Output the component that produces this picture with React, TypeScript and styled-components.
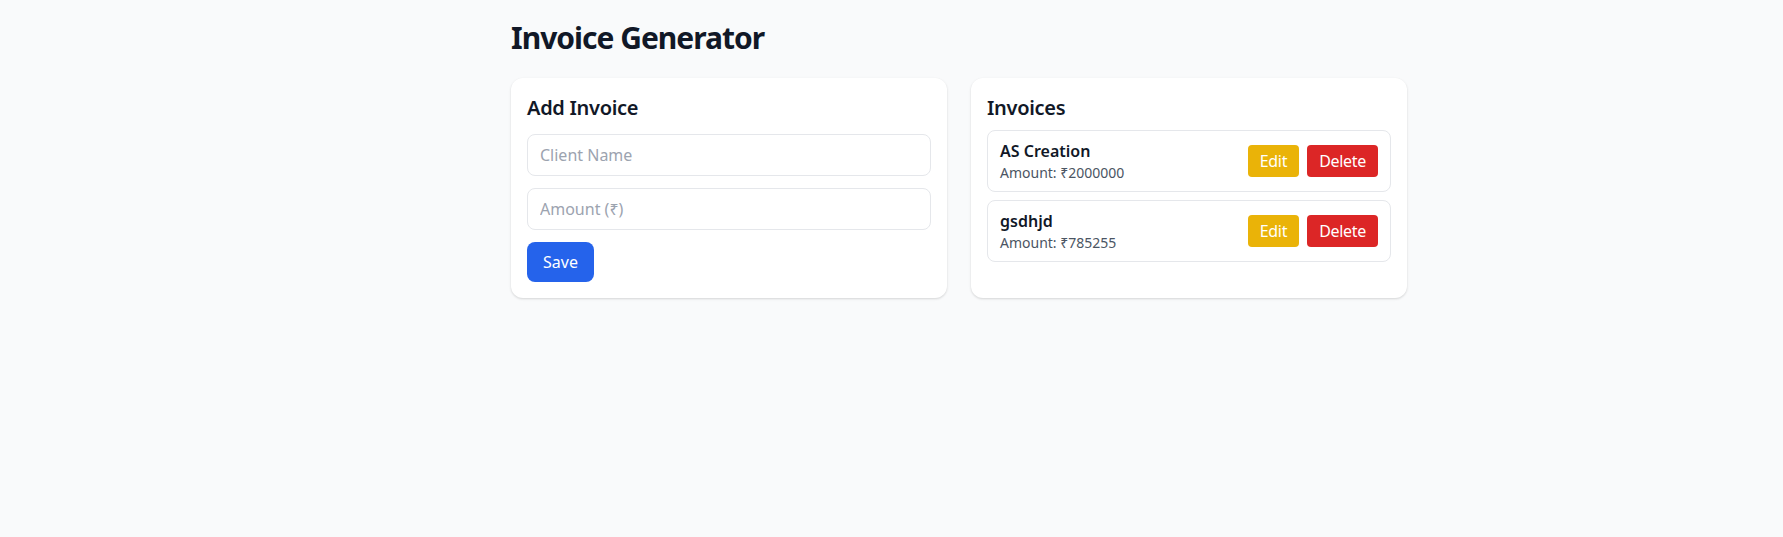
import React from "react";
import styled, { createGlobalStyle } from "styled-components";

const GlobalStyle = createGlobalStyle`
  * { box-sizing: border-box; }
  body {
    margin: 0;
    background: #f9fafb;
    font-family: "Segoe UI", "Noto Sans", "Open Sans", sans-serif;
    color: #111827;
  }
`;

const Page = styled.div`
  padding: 20px 0 40px 135px;
`;

const Container = styled.div`
  max-width: 896px;
  margin: 0 auto;
`;

const Title = styled.h1`
  margin: 0 0 22px;
  font-size: 30px;
  line-height: 36px;
  font-weight: 700;
  letter-spacing: -1px;
  color: #111827;
`;

const Grid = styled.div`
  display: grid;
  grid-template-columns: 1fr 1fr;
  gap: 24px;
`;

const Card = styled.section`
  background: #ffffff;
  border-radius: 12px;
  padding: 16px;
  box-shadow: 0 1px 3px rgba(0, 0, 0, 0.1), 0 1px 2px rgba(0, 0, 0, 0.06);
`;

const CardTitle = styled.h2<{ $gap: number }>`
  margin: 0 0 ${(p) => p.$gap}px;
  font-size: 20px;
  line-height: 28px;
  font-weight: 600;
  letter-spacing: -0.3px;
  color: #111827;
`;

const Form = styled.div`
  display: flex;
  flex-direction: column;
  align-items: flex-start;
  gap: 12px;
`;

const Input = styled.input`
  width: 100%;
  padding: 8px 12px;
  border: 1px solid #e5e7eb;
  border-radius: 8px;
  font: inherit;
  font-size: 16px;
  line-height: 24px;
  color: #111827;
  background: #fff;
  outline: none;
  &::placeholder {
    color: #9ca3af;
  }
`;

const SaveButton = styled.button`
  border: none;
  background: #2563eb;
  color: #fff;
  font: inherit;
  font-size: 16px;
  line-height: 24px;
  padding: 8px 16px;
  border-radius: 8px;
  cursor: pointer;
`;

const List = styled.ul`
  list-style: none;
  margin: 0;
  padding: 0;
  display: flex;
  flex-direction: column;
  gap: 8px;
`;

const Item = styled.li`
  display: flex;
  align-items: center;
  justify-content: space-between;
  border: 1px solid #e5e7eb;
  border-radius: 8px;
  padding: 8px 12px;
`;

const Name = styled.div`
  font-size: 16px;
  line-height: 24px;
  font-weight: 600;
  color: #111827;
`;

const Amount = styled.div`
  font-size: 14px;
  line-height: 20px;
  color: #4b5563;
`;

const Actions = styled.div`
  display: flex;
  gap: 8px;
`;

const ActionButton = styled.button<{ $color: string }>`
  border: none;
  background: ${(p) => p.$color};
  color: #fff;
  font: inherit;
  font-size: 16px;
  line-height: 24px;
  padding: 4px 12px;
  border-radius: 4px;
  letter-spacing: -0.3px;
  cursor: pointer;
`;

const invoices = [
  { id: 1, name: "AS Creation", amount: 2000000 },
  { id: 2, name: "gsdhjd", amount: 785255 },
];

export default function App() {
  return (
    <>
      <GlobalStyle />
      <Page>
        <Container>
          <Title>Invoice Generator</Title>
          <Grid>
            <Card>
              <CardTitle $gap={12}>Add Invoice</CardTitle>
              <Form>
                <Input placeholder="Client Name" />
                <Input placeholder="Amount (₹)" />
                <SaveButton>Save</SaveButton>
              </Form>
            </Card>
            <Card>
              <CardTitle $gap={8}>Invoices</CardTitle>
              <List>
                {invoices.map((inv) => (
                  <Item key={inv.id}>
                    <div>
                      <Name>{inv.name}</Name>
                      <Amount>Amount: ₹{inv.amount}</Amount>
                    </div>
                    <Actions>
                      <ActionButton $color="#eab308">Edit</ActionButton>
                      <ActionButton $color="#dc2626">Delete</ActionButton>
                    </Actions>
                  </Item>
                ))}
              </List>
            </Card>
          </Grid>
        </Container>
      </Page>
    </>
  );
}
